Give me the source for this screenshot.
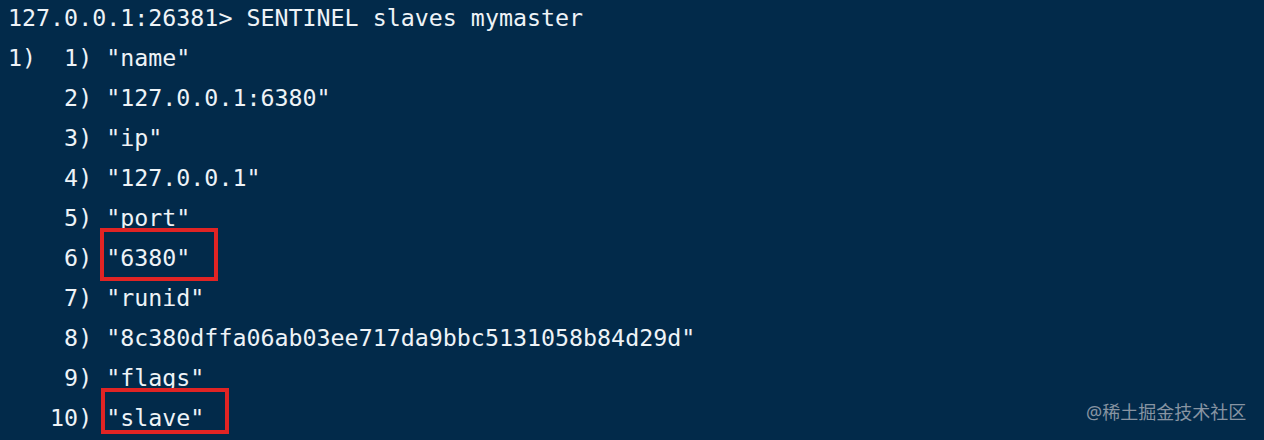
import React from "react";

const lines = [
  '127.0.0.1:26381> SENTINEL slaves mymaster',
  '1)  1) "name"',
  '    2) "127.0.0.1:6380"',
  '    3) "ip"',
  '    4) "127.0.0.1"',
  '    5) "port"',
  '    6) "6380"',
  '    7) "runid"',
  '    8) "8c380dffa06ab03ee717da9bbc5131058b84d29d"',
  '    9) "flags"',
  '   10) "slave"',
];

export default function App() {
  return (
    <div className="relative w-[1264px] h-[440px] overflow-hidden bg-[#022a4a]">
      <div
        className="pl-[8px] -mt-[2px] text-[23.3px] leading-[40px] text-[#eef3f7] whitespace-pre"
        style={{ fontFamily: '"DejaVu Sans Mono", monospace' }}
      >
        {lines.map((l, i) => (
          <div key={i}>{l}</div>
        ))}
      </div>
      <div className="absolute left-[100px] top-[228px] w-[118px] h-[53px] border-[4px] border-[#e12424]" />
      <div className="absolute left-[101px] top-[388px] w-[128px] h-[46px] border-[4px] border-[#e12424]" />
      <div
        className="absolute left-[1086px] top-[399px] text-[18px] leading-[26px] text-[#8794a2]"
        style={{ fontFamily: '"Noto Sans", "Noto Sans CJK SC", sans-serif' }}
      >
        @稀土掘金技术社区
      </div>
    </div>
  );
}
